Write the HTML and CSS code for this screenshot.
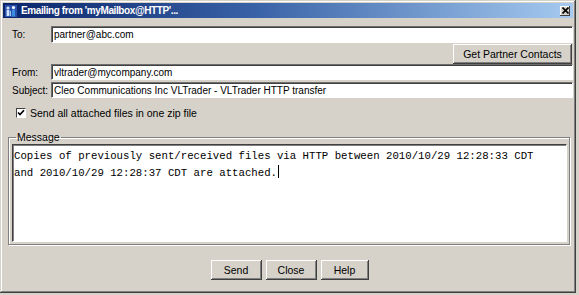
FILE: index.html
```html
<!DOCTYPE html>
<html lang="en">

<head>
    <meta charset="UTF-8">
    <title>Emailing from 'myMailbox@HTTP'...</title>
    <link rel="stylesheet" href="styles.css">
</head>

<body>
    <div class="window">
        <div class="titlebar">
            <svg class="app-icon" width="12" height="12" viewBox="0 0 12 12">
                <rect x="0" y="0" width="12" height="12" fill="#2a4fa8"/>
                <circle cx="3" cy="3" r="1.6" fill="#cfe4ff"/>
                <rect x="1.6" y="5" width="2.8" height="6" fill="#cfe4ff"/>
                <circle cx="8.5" cy="2.5" r="1.6" fill="#ffffff"/>
                <rect x="7" y="4.5" width="3" height="7" fill="#3b8de0"/>
                <rect x="5" y="6" width="1" height="5" fill="#9cc8f5"/>
            </svg>
            <span class="title">Emailing from 'myMailbox@HTTP'...</span>
            <div class="close-btn">
                <svg width="7" height="7" viewBox="0 0 7 7">
                    <path d="M0.5 0.5 L6.5 6.5 M6.5 0.5 L0.5 6.5" stroke="#000" stroke-width="1.6"/>
                </svg>
            </div>
        </div>

        <div class="content">
            <div class="row row-to">
                <label class="lbl">To:</label>
                <input class="field field-tall" type="text" value="partner@abc.com">
            </div>
            <div class="row row-right">
                <button class="btn btn-contacts">Get Partner Contacts</button>
            </div>
            <div class="row">
                <label class="lbl">From:</label>
                <input class="field" type="text" value="vltrader@mycompany.com">
            </div>
            <div class="row row-subject">
                <label class="lbl">Subject:</label>
                <input class="field" type="text" value="Cleo Communications Inc VLTrader - VLTrader HTTP transfer">
            </div>

            <div class="check-row">
                <span class="checkbox">
                    <svg width="8" height="8" viewBox="0 0 8 8">
                        <path d="M1 3.5 L3 5.6 L7 1.2" fill="none" stroke="#000" stroke-width="1.7"/>
                    </svg>
                </span>
                <span>Send all attached files in one zip file</span>
            </div>

            <fieldset class="group">
                <legend>Message</legend>
                <div class="message">Copies of previously sent/received files via HTTP between 2010/10/29 12:28:33 CDT
and 2010/10/29 12:28:37 CDT are attached.<span class="caret"></span></div>
            </fieldset>

            <div class="actions">
                <button class="btn btn-action">Send</button>
                <button class="btn btn-action">Close</button>
                <button class="btn btn-action btn-help">Help</button>
            </div>
        </div>
    </div>
</body>

</html>
```

FILE: styles.css
```css
body {
    margin: 0;
    background-color: #d6d2ca;
    font-family: "Liberation Sans", Arial, sans-serif;
    font-size: 10px;
    color: #000;
}

.window {
    box-sizing: border-box;
    width: 576px;
    height: 293px;
    padding: 3px;
    background-color: #d6d2ca;
    box-shadow: inset -1px -1px #404040, inset 1px 1px #d6d2ca, inset -2px -2px #808080, inset 2px 2px #ffffff;
}

.titlebar {
    display: flex;
    align-items: center;
    height: 15px;
    padding: 0 3px 0 2px;
    background: linear-gradient(to right, #0a246a, #3a64a8 45%, #a6caf0);
}

.app-icon {
    flex: none;
}

.title {
    margin-left: 4px;
    color: #fff;
    font-weight: bold;
    font-size: 10px;
    letter-spacing: -0.4px;
    flex: 1;
    white-space: nowrap;
}

.close-btn {
    display: flex;
    align-items: center;
    justify-content: center;
    width: 10px;
    height: 10px;
    background-color: #d6d2ca;
    box-shadow: inset -1px -1px #404040, inset 1px 1px #ffffff;
}

.content {
    padding: 0 0 0 9px;
}

.row {
    display: flex;
    align-items: center;
}

.row-to {
    margin-top: 8px;
}

.row-right {
    justify-content: flex-end;
    margin-top: 1px;
}

.row-subject {
    margin-top: 2px;
}

.lbl {
    width: 39px;
    flex: none;
}

.field {
    box-sizing: border-box;
    flex: 1;
    height: 16px;
    margin: 0;
    padding: 0 2px;
    border: 1px solid;
    border-color: #6e6e6e #ffffff #ffffff #6e6e6e;
    box-shadow: inset 1px 1px #404040;
    background-color: #fff;
    font-family: "Liberation Sans", Arial, sans-serif;
    font-size: 10px;
    color: #000;
    outline: none;
}

.field-tall {
    height: 17px;
}

.btn {
    box-sizing: border-box;
    height: 20px;
    margin: 0;
    padding: 0;
    border: none;
    background-color: #d6d2ca;
    box-shadow: inset -1px -1px #404040, inset 1px 1px #ffffff, inset -2px -2px #808080;
    font-family: "Liberation Sans", Arial, sans-serif;
    font-size: 10.5px;
    color: #000;
}

.btn-contacts {
    width: 119px;
    margin-right: 1px;
}

.check-row {
    display: flex;
    align-items: center;
    gap: 4px;
    margin-top: 9px;
    padding-left: 4px;
    font-size: 10.5px;
}

.checkbox {
    box-sizing: border-box;
    display: flex;
    align-items: center;
    justify-content: center;
    width: 10px;
    height: 10px;
    background-color: #fff;
    border: 1px solid;
    border-color: #404040 #ffffff #ffffff #404040;
}

.group {
    margin: 12px 3px 0 -4px;
    padding: 1px 2px 2px 3px;
    border: 1px solid #808080;
    box-shadow: 1px 1px #ffffff, inset 1px 1px #ffffff;
    font-size: 10.5px;
}

.group legend {
    margin-left: 4px;
    padding: 0 1px;
}

.message {
    box-sizing: border-box;
    height: 98px;
    padding: 3px 1px;
    background-color: #fff;
    border: 1px solid;
    border-color: #404040 #ffffff #ffffff #404040;
    box-shadow: inset 1px 1px #808080;
    font-family: "Liberation Mono", "Courier New", monospace;
    font-size: 10.7px;
    line-height: 17px;
    white-space: pre;
}

.caret {
    display: inline-block;
    width: 1px;
    height: 13px;
    margin-left: 1px;
    vertical-align: -2px;
    background-color: #000;
}

.actions {
    display: flex;
    justify-content: center;
    gap: 4px;
    margin-top: 15px;
    padding-right: 6px;
}

.btn-action {
    width: 51px;
}

.btn-help {
    width: 48px;
}
```
